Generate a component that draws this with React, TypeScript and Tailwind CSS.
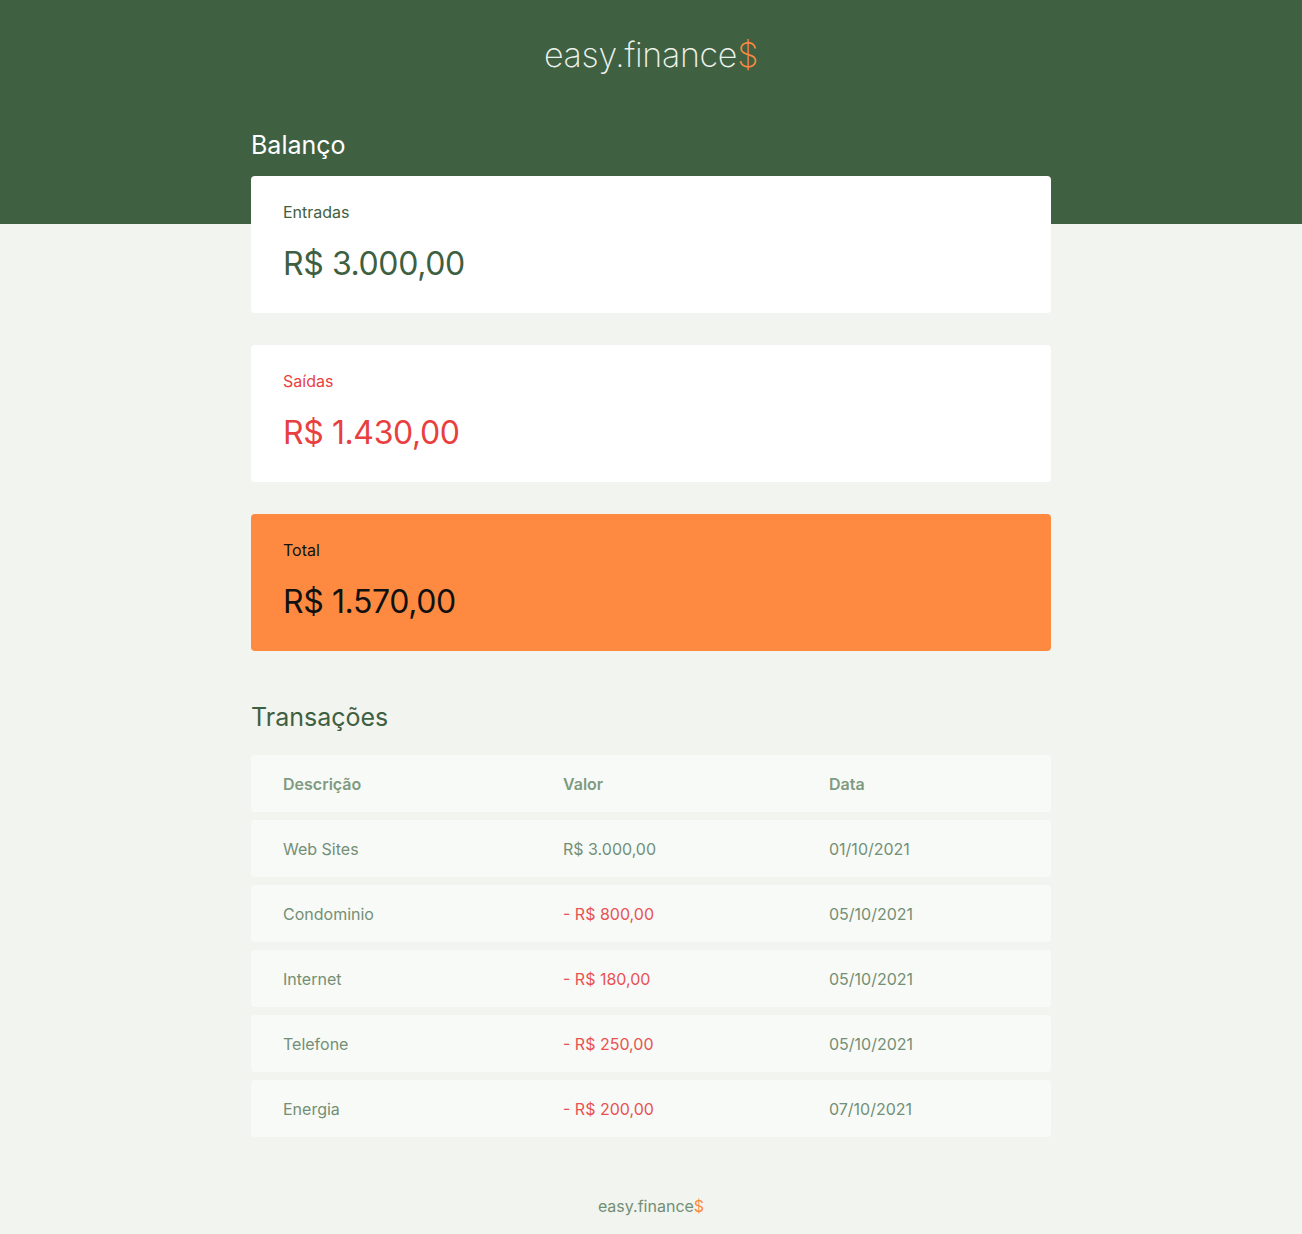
import React from 'react';

interface Transaction {
  description: string;
  amount: string;
  expense: boolean;
  date: string;
}

const transactions: Transaction[] = [
  { description: 'Web Sites', amount: 'R$ 3.000,00', expense: false, date: '01/10/2021' },
  { description: 'Condominio', amount: '- R$ 800,00', expense: true, date: '05/10/2021' },
  { description: 'Internet', amount: '- R$ 180,00', expense: true, date: '05/10/2021' },
  { description: 'Telefone', amount: '- R$ 250,00', expense: true, date: '05/10/2021' },
  { description: 'Energia', amount: '- R$ 200,00', expense: true, date: '07/10/2021' },
];

const BalanceCard: React.FC<{ label: string; value: string; variant: 'in' | 'out' | 'total' }> = ({ label, value, variant }) => {
  const box = variant === 'total' ? 'bg-[#fe8a41] text-black' : 'bg-white';
  const text =
    variant === 'in' ? 'text-[#3f5f42]' : variant === 'out' ? 'text-[#e83f3f]' : 'text-[#111]';

  return (
    <div className={`rounded-[4px] px-8 pt-6 pb-[25px] ${box}`}>
      <h3 className={`text-[16px] leading-6 font-normal ${text}`}>{label}</h3>
      <p className={`mt-4 text-[32px] leading-[48px] font-normal tracking-[-0.4px] ${text}`}>{value}</p>
    </div>
  );
};

export default function App() {
  return (
    <div
      className="min-h-[1234px] bg-[linear-gradient(#3f6142_224px,#f2f4ef_224px)] font-['Inter','Noto_Sans',sans-serif]"
    >
      <header className="pt-[32px] pb-[8px] text-center">
        <h1 className="text-[34px] leading-[46px] font-extralight text-[#eef2ec] tracking-[-0.3px]">
          easy.finance<span className="text-[#fe8a41]">$</span>
        </h1>
      </header>

      <main className="mx-auto w-[800px]">
        <section>
          <h2 className="pt-[41px] pb-[13px] text-[25px] leading-[36px] text-white">Balanço</h2>
          <div className="flex flex-col gap-8">
            <BalanceCard label="Entradas" value="R$ 3.000,00" variant="in" />
            <BalanceCard label="Saídas" value="R$ 1.430,00" variant="out" />
            <BalanceCard label="Total" value="R$ 1.570,00" variant="total" />
          </div>
        </section>

        <section className="pt-[48px]">
          <h2 className="text-[25px] leading-[36px] text-[#3f5f42]">Transações</h2>
          <div className="mt-[20px] flex flex-col gap-2">
            <div className="grid h-[57px] grid-cols-[280px_266px_254px] items-center rounded-[4px] bg-[#f8faf7] pl-8 text-[16px] font-semibold text-[#809a81]">
              <span>Descrição</span>
              <span>Valor</span>
              <span>Data</span>
            </div>
            {transactions.map((t) => (
              <div
                key={t.description}
                className="grid h-[57px] grid-cols-[280px_266px_254px] items-center rounded-[4px] bg-[#f8faf7] pl-8 text-[16px] text-[#738f75]"
              >
                <span>{t.description}</span>
                <span className={t.expense ? 'text-[#e85252]' : ''}>{t.amount}</span>
                <span>{t.date}</span>
              </div>
            ))}
          </div>
        </section>
      </main>

      <footer className="pt-[57px] pb-[17px] text-center text-[16px] leading-6 text-[#738f75]">
        easy.finance<span className="text-[#fe8a41]">$</span>
      </footer>
    </div>
  );
}
